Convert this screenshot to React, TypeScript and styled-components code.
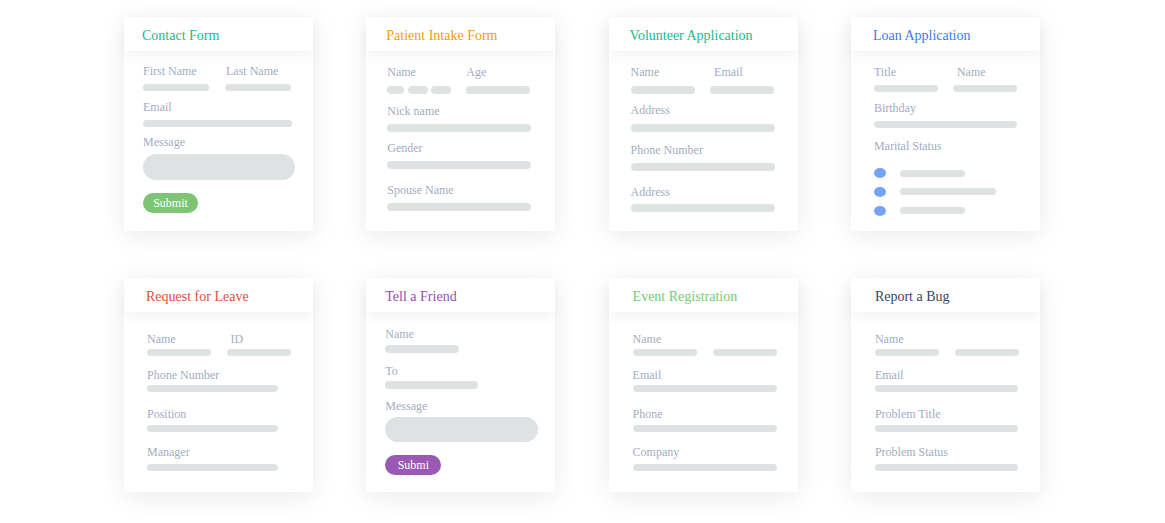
import React from "react";
import styled, { createGlobalStyle } from "styled-components";

const Global = createGlobalStyle`
  html, body { margin: 0; padding: 0; background: #ffffff; }
  body { font-family: "Liberation Serif", "Times New Roman", serif; }
`;

const Page = styled.div`
  width: 1165px;
  height: 523px;
  box-sizing: border-box;
  padding: 17px 0 0 124px;
  display: grid;
  grid-template-columns: repeat(4, 189px);
  grid-auto-rows: 214px;
  column-gap: 53.3px;
  row-gap: 47px;
  overflow: hidden;
`;

const Card = styled.section`
  background: #ffffff;
  border-radius: 3px;
  box-shadow: 0 4px 26px rgba(0, 0, 0, 0.085);
  display: flex;
  flex-direction: column;
`;

const Header = styled.header<{ $pl: number }>`
  height: 34px;
  flex: none;
  display: flex;
  align-items: center;
  padding-left: ${(p) => p.$pl}px;
  border-radius: 3px 3px 0 0;
  background: #ffffff;
  box-shadow: 0 6px 12px rgba(0, 0, 0, 0.045);
  position: relative;
  z-index: 1;
`;

const Title = styled.h2<{ $color: string; $pt?: number }>`
  margin: 0;
  font-weight: normal;
  font-size: 14px;
  line-height: 16px;
  color: ${(p) => p.$color};
  padding-top: ${(p) => p.$pt ?? 3}px;
`;

const Body = styled.div<{ $pl: number; $pt: number }>`
  padding: ${(p) => p.$pt}px 0 0 ${(p) => p.$pl}px;
  display: flex;
  flex-direction: column;
  align-items: flex-start;
`;

const Label = styled.div<{ $mt?: number; $ml?: number }>`
  font-size: 12px;
  line-height: 14px;
  color: #a2adbf;
  white-space: nowrap;
  margin-top: ${(p) => p.$mt ?? 0}px;
  margin-left: ${(p) => p.$ml ?? 0}px;
`;

const Bar = styled.div<{ $w: number; $h?: number; $mt?: number }>`
  width: ${(p) => p.$w}px;
  height: ${(p) => p.$h ?? 8}px;
  margin-top: ${(p) => p.$mt ?? 0}px;
  border-radius: 5px;
  background: #dfe2e3;
  flex: none;
`;

const Pair = styled.div<{ $mt?: number; $col?: number; $gap?: number }>`
  display: grid;
  grid-template-columns: ${(p) => p.$col ?? 64}px ${(p) => p.$col ?? 64}px;
  column-gap: ${(p) => p.$gap ?? 16}px;
  margin-top: ${(p) => p.$mt ?? 0}px;
`;

const Column = styled.div`
  display: flex;
  flex-direction: column;
  align-items: flex-start;
`;

const Pills = styled.div<{ $mt: number }>`
  display: flex;
  gap: 3.5px;
  margin-top: ${(p) => p.$mt}px;
`;

const TextArea = styled.div<{ $w: number; $h: number; $mt: number }>`
  width: ${(p) => p.$w}px;
  height: ${(p) => p.$h}px;
  margin-top: ${(p) => p.$mt}px;
  border-radius: 13px;
  background: #dfe2e3;
`;

const Button = styled.div<{ $bg: string; $w: number; $mt: number }>`
  width: ${(p) => p.$w}px;
  height: 20px;
  margin-top: ${(p) => p.$mt}px;
  border-radius: 10px;
  background: ${(p) => p.$bg};
  color: #ffffff;
  font-size: 12px;
  line-height: 20px;
  text-align: center;
`;

const RadioRow = styled.div<{ $mt: number }>`
  display: flex;
  align-items: center;
  height: 10px;
  margin-top: ${(p) => p.$mt}px;
`;

const Radio = styled.div`
  width: 12px;
  height: 10px;
  border-radius: 50%;
  background: #74a3f5;
  margin-right: 14px;
`;

const BarSkinny = styled(Bar)`
  height: 7px;
`;

export default function App() {
  return (
    <>
      <Global />
      <Page>
        {/* Contact Form */}
        <Card>
          <Header $pl={18}>
            <Title $color="#1bb98f">Contact Form</Title>
          </Header>
          <Body $pl={19} $pt={13}>
            <Pair $col={66} $gap={15.5}>
              <Column>
                <Label>First Name</Label>
                <Bar $w={66} $h={7} $mt={6} />
              </Column>
              <Column>
                <Label $ml={1.5}>Last Name</Label>
                <Bar $w={66} $h={7} $mt={6} />
              </Column>
            </Pair>
            <Label $mt={9}>Email</Label>
            <Bar $w={149} $h={7} $mt={6} />
            <Label $mt={8}>Message</Label>
            <TextArea $w={152} $h={26} $mt={5} />
            <Button $bg="#7dc474" $w={55} $mt={13}>
              Submit
            </Button>
          </Body>
        </Card>

        {/* Patient Intake Form */}
        <Card>
          <Header $pl={20}>
            <Title $color="#f39c12">Patient Intake Form</Title>
          </Header>
          <Body $pl={21} $pt={14}>
            <Pair $gap={15}>
              <Column>
                <Label>Name</Label>
                <Pills $mt={7}>
                  <Bar $w={17} />
                  <Bar $w={20} />
                  <Bar $w={20} />
                </Pills>
              </Column>
              <Column>
                <Label>Age</Label>
                <Bar $w={64} $mt={7} />
              </Column>
            </Pair>
            <Label $mt={10}>Nick name</Label>
            <Bar $w={144} $mt={6} />
            <Label $mt={9}>Gender</Label>
            <Bar $w={144} $mt={6} />
            <Label $mt={14}>Spouse Name</Label>
            <Bar $w={144} $mt={6} />
          </Body>
        </Card>

        {/* Volunteer Application */}
        <Card>
          <Header $pl={21}>
            <Title $color="#1bb98f">Volunteer Application</Title>
          </Header>
          <Body $pl={22} $pt={14}>
            <Pair $gap={15}>
              <Column>
                <Label>Name</Label>
                <Bar $w={64} $mt={7} />
              </Column>
              <Column>
                <Label $ml={4.5}>Email</Label>
                <Bar $w={64} $mt={7} />
              </Column>
            </Pair>
            <Label $mt={9}>Address</Label>
            <Bar $w={144} $mt={7} />
            <Label $mt={11}>Phone Number</Label>
            <Bar $w={144} $mt={6} />
            <Label $mt={14}>Address</Label>
            <Bar $w={144} $mt={5} />
          </Body>
        </Card>

        {/* Loan Application */}
        <Card>
          <Header $pl={22}>
            <Title $color="#3a7cee">Loan Application</Title>
          </Header>
          <Body $pl={23} $pt={14}>
            <Pair $gap={15.5}>
              <Column>
                <Label>Title</Label>
                <Bar $w={64} $h={7} $mt={6} />
              </Column>
              <Column>
                <Label $ml={3.5}>Name</Label>
                <Bar $w={64} $h={7} $mt={6} />
              </Column>
            </Pair>
            <Label $mt={9}>Birthday</Label>
            <Bar $w={143} $h={7} $mt={6} />
            <Label $mt={11}>Marital Status</Label>
            <RadioRow $mt={15}>
              <Radio />
              <BarSkinny $w={65} />
            </RadioRow>
            <RadioRow $mt={8.5}>
              <Radio />
              <BarSkinny $w={96} />
            </RadioRow>
            <RadioRow $mt={9}>
              <Radio />
              <BarSkinny $w={65} />
            </RadioRow>
          </Body>
        </Card>

        {/* Request for Leave */}
        <Card>
          <Header $pl={22}>
            <Title $color="#e74c3c" $pt={4}>Request for Leave</Title>
          </Header>
          <Body $pl={23} $pt={20}>
            <Pair $gap={15.5}>
              <Column>
                <Label>Name</Label>
                <Bar $w={64} $h={7} $mt={3} />
              </Column>
              <Column>
                <Label $ml={4}>ID</Label>
                <Bar $w={64} $h={7} $mt={3} />
              </Column>
            </Pair>
            <Label $mt={12}>Phone Number</Label>
            <Bar $w={131} $h={7} $mt={3} />
            <Label $mt={15}>Position</Label>
            <Bar $w={131} $h={7} $mt={4} />
            <Label $mt={13}>Manager</Label>
            <Bar $w={131} $h={7} $mt={5} />
          </Body>
        </Card>

        {/* Tell a Friend */}
        <Card>
          <Header $pl={19}>
            <Title $color="#9150b0" $pt={4}>Tell a Friend</Title>
          </Header>
          <Body $pl={19} $pt={15}>
            <Label>Name</Label>
            <Bar $w={74} $mt={4} />
            <Label $mt={11}>To</Label>
            <Bar $w={93} $mt={3} />
            <Label $mt={10}>Message</Label>
            <TextArea $w={153} $h={25} $mt={4} />
            <Button $bg="#9b59b6" $w={56} $mt={13}>
              Submi
            </Button>
          </Body>
        </Card>

        {/* Event Registration */}
        <Card>
          <Header $pl={24}>
            <Title $color="#74cc74" $pt={4}>Event Registration</Title>
          </Header>
          <Body $pl={24} $pt={20}>
            <Label>Name</Label>
            <Pair $mt={3}>
              <Bar $w={64} $h={7} />
              <Bar $w={64} $h={7} />
            </Pair>
            <Label $mt={12}>Email</Label>
            <Bar $w={144} $h={7} $mt={3} />
            <Label $mt={15}>Phone</Label>
            <Bar $w={144} $h={7} $mt={4} />
            <Label $mt={13}>Company</Label>
            <Bar $w={144} $h={7} $mt={5} />
          </Body>
        </Card>

        {/* Report a Bug */}
        <Card>
          <Header $pl={24}>
            <Title $color="#34495e" $pt={4}>Report a Bug</Title>
          </Header>
          <Body $pl={24} $pt={20}>
            <Label>Name</Label>
            <Pair $mt={3}>
              <Bar $w={64} $h={7} />
              <Bar $w={64} $h={7} />
            </Pair>
            <Label $mt={12}>Email</Label>
            <Bar $w={143} $h={7} $mt={3} />
            <Label $mt={15}>Problem Title</Label>
            <Bar $w={143} $h={7} $mt={4} />
            <Label $mt={13}>Problem Status</Label>
            <Bar $w={143} $h={7} $mt={5} />
          </Body>
        </Card>
      </Page>
    </>
  );
}
